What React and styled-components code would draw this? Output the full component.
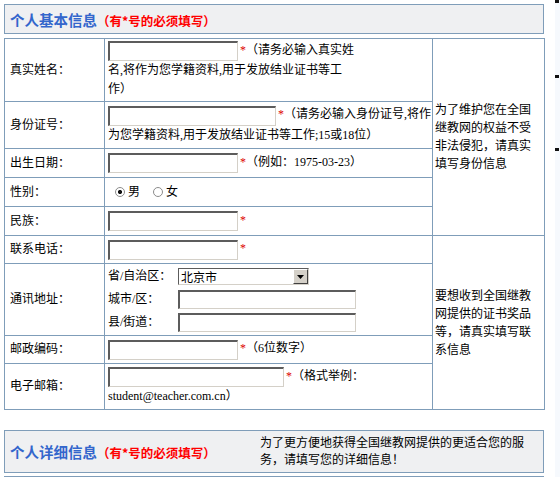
import React from 'react'
import styled, { createGlobalStyle } from 'styled-components'

const GlobalStyle = createGlobalStyle`
  html, body {
    margin: 0;
    padding: 0;
    background: #fff;
  }
  body {
    font-family: "Liberation Serif", "Noto Sans CJK SC", serif;
    font-size: 12px;
    color: #000;
  }
`

const Page = styled.div`
  display: flex;
  width: 560px;
  min-height: 477px;
  overflow: hidden;
`

const Main = styled.div`
  width: 540px;
  padding: 4px 0 0 4px;
  flex-shrink: 0;
`

const SideStrip = styled.div`
  margin-left: 11px;
  width: 5px;
  background: #f6f9fd;
  display: flex;
  flex-direction: column;
`

const Tick = styled.span`
  width: 4px;
  height: 3px;
  background: #111;
  margin-top: ${p => p.$gap || 0}px;
`

const SectionBar = styled.div`
  display: grid;
  grid-template-columns: 250px 1fr;
  align-items: center;
  box-sizing: border-box;
  height: ${p => p.$h}px;
  margin-top: ${p => p.$top || 0}px;
  padding: 0 5px;
  border: 1px solid #7f9db9;
  background: #eff0f2;
`

const SectionTitle = styled.div`
  white-space: nowrap;
`

const TitleText = styled.span`
  font-family: "Noto Sans CJK SC", sans-serif;
  font-weight: bold;
  font-size: 14.5px;
  color: #3366cc;
`

const Required = styled.span`
  font-family: "Noto Sans CJK SC", sans-serif;
  font-weight: bold;
  font-size: 12.5px;
  color: #ff0000;
`

const SectionNote = styled.div`
  width: 270px;
  line-height: 17px;
`

const FormTable = styled.table`
  width: 540px;
  margin-top: 4px;
  border-collapse: collapse;
  table-layout: fixed;
  background: #fff;
`

const Row = styled.tr`
  height: ${p => p.$h}px;
`

const LabelCell = styled.td`
  border: 1px solid #7f9db9;
  padding: 0 0 0 5px;
  vertical-align: middle;
  line-height: 19px;
`

const FieldCell = styled.td`
  border: 1px solid #7f9db9;
  padding: 0 0 0 3px;
  vertical-align: middle;
  line-height: 19px;
  white-space: nowrap;
`

const NoteCell = styled.td`
  border: 1px solid #7f9db9;
  padding: 0 2px;
  vertical-align: middle;
  line-height: 18px;
`

const TextInput = styled.input`
  box-sizing: border-box;
  width: ${p => p.$w}px;
  height: ${p => p.$h || 20}px;
  margin: 0;
  padding: 0 2px;
  vertical-align: middle;
  border-style: solid;
  border-width: 2px 1px 1px 2px;
  border-color: #5c5c5c #d4d0c8 #d4d0c8 #5c5c5c;
  background: #fff;
  font: inherit;
  outline: none;
`

const Star = styled.span`
  color: #d00;
  margin: 0 0 0 2px;
`

const Hint = styled.span`
  color: #000;
`

const Email = styled.span`
  font-family: "Liberation Serif", serif;
`

const RadioGroup = styled.div`
  display: flex;
  align-items: center;
  padding-left: 7px;
`

const RadioLabel = styled.label`
  display: inline-flex;
  align-items: center;
  margin-right: 13px;
`

const Radio = styled.input`
  appearance: none;
  box-sizing: border-box;
  width: 10px;
  height: 10px;
  margin: 0 3px 0 0;
  border: 1px solid #8c8c8c;
  border-radius: 50%;
  background: #fff;

  &:checked {
    background: radial-gradient(circle, #111 0 2px, #fff 2.2px);
  }
`

const AddressGrid = styled.div`
  display: grid;
  grid-template-columns: 70px auto;
  grid-auto-rows: 23px;
  align-items: center;
`

const SubLabel = styled.span`
  white-space: nowrap;
`

const SelectWrap = styled.div`
  display: flex;
  align-items: center;
  box-sizing: border-box;
  width: 131px;
  height: 17px;
  border-style: solid;
  border-width: 1px;
  border-color: #5c5c5c #d4d0c8 #d4d0c8 #5c5c5c;
  background: #fff;
`

const Select = styled.select`
  appearance: none;
  flex: 1;
  min-width: 0;
  height: 15px;
  margin: 0;
  padding: 0 2px;
  border: 0;
  background: transparent;
  font-family: "Noto Sans CJK SC", sans-serif;
  font-size: 12px;
  line-height: 15px;
  outline: none;
`

const ArrowButton = styled.span`
  display: flex;
  align-items: center;
  justify-content: center;
  box-sizing: border-box;
  width: 15px;
  height: 15px;
  background: #d4d0c8;
  border-style: solid;
  border-width: 1px;
  border-color: #fff #404040 #404040 #fff;
`

const BottomBox = styled.div`
  height: 20px;
  margin-top: 3px;
  border: 1px solid #7f9db9;
  background: #eff0f2;
`

function RequiredNote() {
  return <Required>（有*号的必须填写）</Required>
}

export default function App() {
  return (
    <>
      <GlobalStyle />
      <Page>
        <Main>
          <SectionBar $h={30}>
            <SectionTitle>
              <TitleText>个人基本信息</TitleText>
              <RequiredNote />
            </SectionTitle>
          </SectionBar>

          <FormTable>
            <colgroup>
              <col style={{ width: 100 }} />
              <col style={{ width: 328 }} />
              <col style={{ width: 112 }} />
            </colgroup>
            <tbody>
              <Row $h={63}>
                <LabelCell>真实姓名：</LabelCell>
                <FieldCell>
                  <TextInput $w={130} />
                  <Star>*</Star>
                  <Hint>
                    （请务必输入真实姓
                    <br />
                    名,将作为您学籍资料,用于发放结业证书等工
                    <br />
                    作）
                  </Hint>
                </FieldCell>
                <NoteCell rowSpan={5}>
                  为了维护您在全国继教网的权益不受非法侵犯，请真实填写身份信息
                </NoteCell>
              </Row>
              <Row $h={47}>
                <LabelCell>身份证号：</LabelCell>
                <FieldCell>
                  <TextInput $w={168} />
                  <Star>*</Star>
                  <Hint>
                    （请务必输入身份证号,将作
                    <br />
                    为您学籍资料,用于发放结业证书等工作;15或18位）
                  </Hint>
                </FieldCell>
              </Row>
              <Row $h={29}>
                <LabelCell>出生日期：</LabelCell>
                <FieldCell>
                  <TextInput $w={130} />
                  <Star>*</Star>
                  <Hint>（例如：1975-03-23）</Hint>
                </FieldCell>
              </Row>
              <Row $h={29}>
                <LabelCell>性别：</LabelCell>
                <FieldCell>
                  <RadioGroup>
                    <RadioLabel>
                      <Radio type="radio" name="sex" defaultChecked />男
                    </RadioLabel>
                    <RadioLabel>
                      <Radio type="radio" name="sex" />女
                    </RadioLabel>
                  </RadioGroup>
                </FieldCell>
              </Row>
              <Row $h={29}>
                <LabelCell>民族：</LabelCell>
                <FieldCell>
                  <TextInput $w={130} />
                  <Star>*</Star>
                </FieldCell>
              </Row>
              <Row $h={28}>
                <LabelCell>联系电话：</LabelCell>
                <FieldCell>
                  <TextInput $w={130} />
                  <Star>*</Star>
                </FieldCell>
                <NoteCell rowSpan={4}>
                  要想收到全国继教网提供的证书奖品等，请真实填写联系信息
                </NoteCell>
              </Row>
              <Row $h={72}>
                <LabelCell>通讯地址：</LabelCell>
                <FieldCell>
                  <AddressGrid>
                    <SubLabel>省/自治区：</SubLabel>
                    <SelectWrap>
                      <Select defaultValue="北京市">
                        <option>北京市</option>
                        <option>天津市</option>
                        <option>上海市</option>
                      </Select>
                      <ArrowButton>
                        <svg width="7" height="4" viewBox="0 0 7 4">
                          <path d="M0 0h7L3.5 4z" fill="#000" />
                        </svg>
                      </ArrowButton>
                    </SelectWrap>
                    <SubLabel>城市/区：</SubLabel>
                    <TextInput $w={178} $h={19} />
                    <SubLabel>县/街道：</SubLabel>
                    <TextInput $w={178} $h={19} />
                  </AddressGrid>
                </FieldCell>
              </Row>
              <Row $h={28}>
                <LabelCell>邮政编码：</LabelCell>
                <FieldCell>
                  <TextInput $w={130} />
                  <Star>*</Star>
                  <Hint>（6位数字）</Hint>
                </FieldCell>
              </Row>
              <Row $h={46}>
                <LabelCell>电子邮箱：</LabelCell>
                <FieldCell>
                  <TextInput $w={176} />
                  <Star>*</Star>
                  <Hint>
                    （格式举例：
                    <br />
                    <Email>student@teacher.com.cn</Email>）
                  </Hint>
                </FieldCell>
              </Row>
            </tbody>
          </FormTable>

          <SectionBar $h={43} $top={20}>
            <SectionTitle>
              <TitleText>个人详细信息</TitleText>
              <RequiredNote />
            </SectionTitle>
            <SectionNote>
              为了更方便地获得全国继教网提供的更适合您的服务，请填写您的详细信息！
            </SectionNote>
          </SectionBar>
          <BottomBox />
        </Main>
        <SideStrip>
          <Tick />
          <Tick $gap={72} />
          <Tick $gap={70} />
        </SideStrip>
      </Page>
    </>
  )
}
